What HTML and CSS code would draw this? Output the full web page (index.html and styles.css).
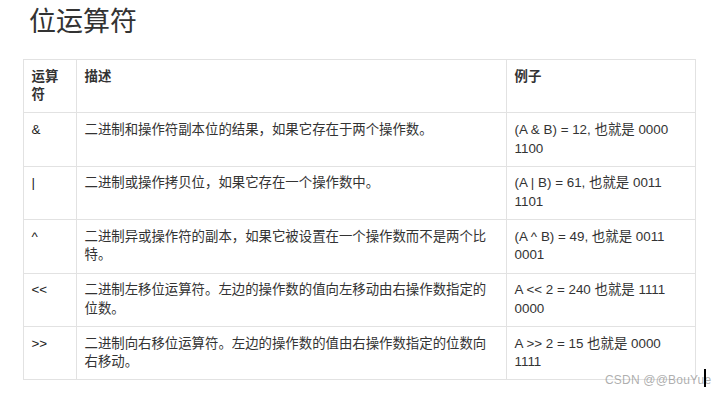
FILE: index.html
```html
<!DOCTYPE html>
<html lang="zh">
<head>
<meta charset="utf-8">
<title>位运算符</title>
<link rel="stylesheet" href="styles.css">
</head>
<body>
<div class="page">
  <h1 class="title">位运算符</h1>
  <table class="ops">
    <colgroup>
      <col class="c1">
      <col class="c2">
      <col class="c3">
    </colgroup>
    <thead>
      <tr><th>运算符</th><th>描述</th><th>例子</th></tr>
    </thead>
    <tbody>
      <tr><td class="op">&amp;</td><td>二进制和操作符副本位的结果，如果它存在于两个操作数。</td><td>(A &amp; B) = 12, 也就是 0000 1100</td></tr>
      <tr><td class="op">|</td><td>二进制或操作拷贝位，如果它存在一个操作数中。</td><td>(A | B) = 61, 也就是 0011 1101</td></tr>
      <tr><td class="op">^</td><td>二进制异或操作符的副本，如果它被设置在一个操作数而不是两个比特。</td><td>(A ^ B) = 49, 也就是 0011 0001</td></tr>
      <tr><td class="op">&lt;&lt;</td><td>二进制左移位运算符。左边的操作数的值向左移动由右操作数指定的位数。</td><td>A &lt;&lt; 2 = 240 也就是 1111 0000</td></tr>
      <tr><td class="op">&gt;&gt;</td><td>二进制向右移位运算符。左边的操作数的值由右操作数指定的位数向右移动。</td><td>A &gt;&gt; 2 = 15 也就是 0000 1111</td></tr>
    </tbody>
  </table>
  <div class="watermark">CSDN @@BouYue</div>
  <div class="caret"></div>
</div>
</body>
</html>
```
FILE: styles.css
```css
html, body {
  margin: 0;
  padding: 0;
  background: #fff;
}
.page {
  position: relative;
  width: 722px;
  height: 395px;
  overflow: hidden;
  font-family: "Liberation Sans", "Noto Sans CJK SC", sans-serif;
  color: #333;
}
.title {
  margin: 0;
  padding-left: 29px;
  height: 40px;
  line-height: 40px;
  font-size: 27px;
  font-weight: 400;
  font-family: "Noto Sans CJK SC", sans-serif;
  color: #333;
}
.ops {
  margin: 19px 0 0 23px;
  border-collapse: collapse;
  table-layout: fixed;
  width: 672px;
  font-size: 13.4px;
  line-height: 18.7px;
}
.c1 { width: 53px; }
.c2 { width: 430px; }
.c3 { width: 189px; }
.ops th, .ops td {
  border: 1px solid #e2e2e2;
  padding: 7.5px 7.5px;
  text-align: left;
  vertical-align: top;
  color: #333;
}
.ops th {
  font-weight: 700;
  height: 37.4px;
}
.ops td.op {
  color: #222;
}
.watermark {
  position: absolute;
  left: 605px;
  top: 373px;
  font-size: 12px;
  line-height: 14px;
  color: rgba(140, 140, 140, 0.7);
  font-family: "Liberation Sans", sans-serif;
  letter-spacing: 0.2px;
}
.caret {
  position: absolute;
  left: 704px;
  top: 369px;
  width: 2px;
  height: 18px;
  background: #000;
}
```
